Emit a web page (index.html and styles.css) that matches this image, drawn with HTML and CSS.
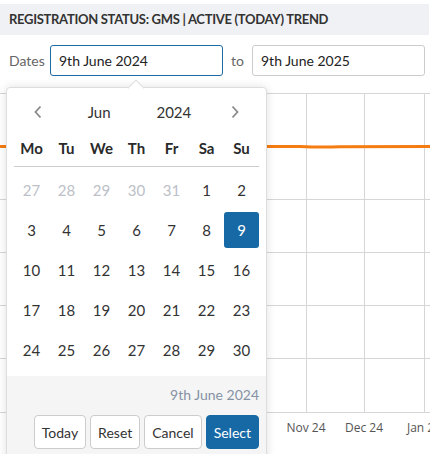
FILE: index.html
```html
<!DOCTYPE html>
<html>
<head>
<meta charset="utf-8">
<link rel="stylesheet" href="styles.css">
</head>
<body>
<div class="page">
  <div class="header">REGISTRATION STATUS: GMS | ACTIVE (TODAY) TREND</div>
  <div class="dates">
    <span class="label">Dates</span>
    <div class="input focused">9th June 2024</div>
    <span class="to">to</span>
    <div class="input">9th June 2025</div>
  </div>
  <svg class="chart" width="430" height="366" viewBox="0 0 430 366">
    <g stroke="#d6d6d6" stroke-width="1">
      <line x1="0" y1="5.5" x2="430" y2="5.5"/>
      <line x1="0" y1="111.5" x2="430" y2="111.5"/>
      <line x1="0" y1="164.5" x2="430" y2="164.5"/>
      <line x1="0" y1="217.5" x2="430" y2="217.5"/>
      <line x1="0" y1="270.5" x2="430" y2="270.5"/>
      <line x1="0" y1="324.5" x2="430" y2="324.5"/>
      <line x1="248.5" y1="5" x2="248.5" y2="324"/>
      <line x1="306.5" y1="5" x2="306.5" y2="324"/>
      <line x1="364.5" y1="5" x2="364.5" y2="324"/>
      <line x1="424.5" y1="5" x2="424.5" y2="324"/>
    </g>
    <path d="M0 58.5 L300 58.5 Q320 59.5 340 58.8 L430 58.5" stroke="#f57c10" stroke-width="3" fill="none"/>
    <g class="axis" font-size="12" fill="#555" text-anchor="middle">
      <text x="306" y="344">Nov 24</text>
      <text x="364" y="344">Dec 24</text>
      <text x="424" y="344">Jan 25</text>
    </g>
  </svg>
  <div class="picker">
    <div class="arrow"></div>
    <div class="nav">
      <span class="chev">
        <svg width="10" height="16" viewBox="0 0 10 16"><path d="M7.5 2.5 L2.5 8 L7.5 13.5" stroke="#8a8a8a" stroke-width="1.8" fill="none"/></svg>
      </span>
      <span class="month">Jun</span>
      <span class="year">2024</span>
      <span class="chev">
        <svg width="10" height="16" viewBox="0 0 10 16"><path d="M2.5 2.5 L7.5 8 L2.5 13.5" stroke="#8a8a8a" stroke-width="1.8" fill="none"/></svg>
      </span>
    </div>
    <div class="weekdays">
      <span>Mo</span><span>Tu</span><span>We</span><span>Th</span><span>Fr</span><span>Sa</span><span>Su</span>
    </div>
    <div class="days">
      <span class="out">27</span><span class="out">28</span><span class="out">29</span><span class="out">30</span><span class="out">31</span><span>1</span><span>2</span>
      <span>3</span><span>4</span><span>5</span><span>6</span><span>7</span><span>8</span><span class="sel">9</span>
      <span>10</span><span>11</span><span>12</span><span>13</span><span>14</span><span>15</span><span>16</span>
      <span>17</span><span>18</span><span>19</span><span>20</span><span>21</span><span>22</span><span>23</span>
      <span>24</span><span>25</span><span>26</span><span>27</span><span>28</span><span>29</span><span>30</span>
    </div>
    <div class="footer">
      <div class="current">9th June 2024</div>
      <div class="buttons">
        <button class="btn">Today</button>
        <button class="btn">Reset</button>
        <button class="btn">Cancel</button>
        <button class="btn primary">Select</button>
      </div>
    </div>
  </div>
</div>
</body>
</html>
```
FILE: styles.css
```css
html, body {
  margin: 0;
  padding: 0;
  background: #fff;
}
body {
  font-family: Lato, "Open Sans", sans-serif;
  color: #333;
  width: 430px;
  height: 454px;
  overflow: hidden;
}
.page {
  position: relative;
  padding-top: 4px;
}
.header {
  height: 31px;
  line-height: 31px;
  background: #f0f1f4;
  padding-left: 9px;
  font-weight: bold;
  font-size: 13px;
  letter-spacing: -0.3px;
  color: #333;
  margin-right: 1px;
}
.dates {
  display: flex;
  align-items: center;
  margin-top: 10px;
  padding-left: 9px;
  height: 31px;
}
.label {
  font-size: 14px;
  color: #666;
  width: 41px;
}
.to {
  font-size: 14px;
  color: #666;
  width: 29px;
  text-align: center;
}
.input {
  box-sizing: border-box;
  width: 173px;
  height: 31px;
  border: 1px solid #ccc;
  border-radius: 3px;
  padding-left: 8px;
  font-size: 14px;
  line-height: 29px;
  color: #222;
}
.input.focused {
  border-color: #1d6aa4;
}
.chart {
  display: block;
  margin-top: 12px;
  font-family: "Open Sans", Lato, sans-serif;
}
.picker {
  position: absolute;
  left: 6px;
  top: 87px;
  width: 259px;
  height: 380px;
  background: #fff;
  border: 1px solid #ddd;
  border-radius: 4px;
  box-shadow: 0 0 10px rgba(0,0,0,0.12);
}
.arrow {
  position: absolute;
  left: 123px;
  top: -6px;
  width: 11px;
  height: 11px;
  background: #fff;
  border-left: 1px solid #ddd;
  border-top: 1px solid #ddd;
  transform: rotate(45deg);
}
.nav {
  display: flex;
  align-items: center;
  height: 34px;
  margin-top: 7px;
  padding: 0 7px;
  font-size: 15px;
  color: #333;
}
.chev {
  width: 48px;
  display: flex;
  justify-content: center;
  align-items: center;
}
.month, .year {
  width: 75px;
  text-align: center;
}
.weekdays {
  display: grid;
  grid-template-columns: repeat(7, 35px);
  margin: 0 7px;
  height: 37px;
  align-items: center;
  border-bottom: 1px solid #ccc;
  font-weight: bold;
  font-size: 15px;
  text-align: center;
  color: #2a2a2a;
}
.days {
  display: grid;
  grid-template-columns: repeat(7, 35px);
  grid-auto-rows: 36px;
  row-gap: 4px;
  margin: 5px 7px 0;
  font-size: 15px;
  text-align: center;
  color: #333;
}
.days span {
  line-height: 36px;
  border-radius: 3px;
}
.days .out {
  color: #bcc0c8;
}
.days .sel {
  background: #1769a6;
  color: #fff;
}
.footer {
  margin-top: 8px;
  background: #f5f5f5;
  padding: 9px 7px 0;
  height: 90px;
  border-radius: 0 0 4px 4px;
}
.current {
  text-align: right;
  font-size: 14px;
  color: #8592a4;
  height: 20px;
  line-height: 20px;
}
.buttons {
  display: flex;
  justify-content: flex-end;
  gap: 4px;
  margin-top: 10px;
}
.btn {
  box-sizing: border-box;
  height: 34px;
  padding: 0 7px;
  font-family: Lato, "Open Sans", sans-serif;
  font-size: 14px;
  color: #333;
  background: #fff;
  border: 1px solid #ccc;
  border-radius: 4px;
}
.btn.primary {
  background: #1769a6;
  border-color: #1769a6;
  color: #fff;
}
```
